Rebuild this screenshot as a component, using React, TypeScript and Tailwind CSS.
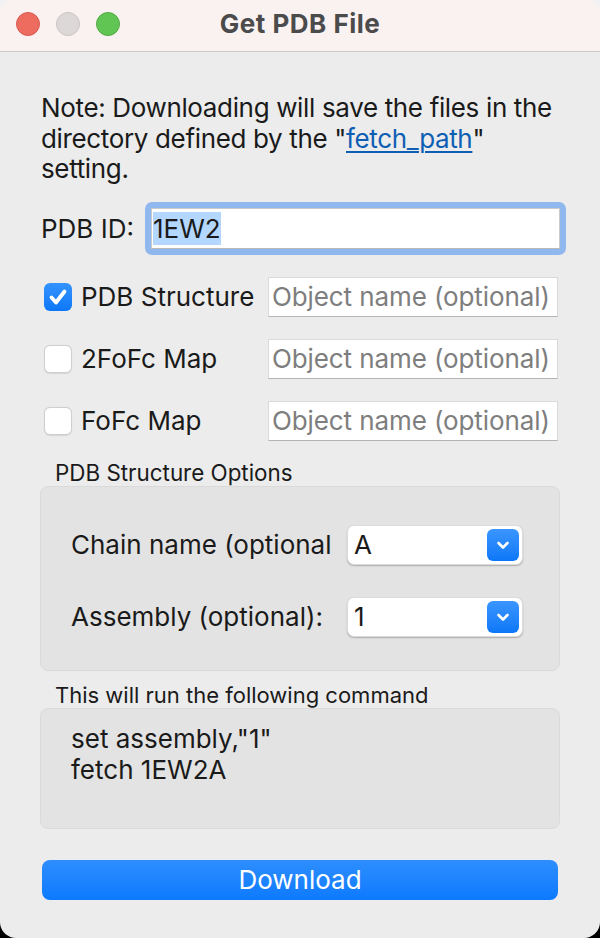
import { useState } from "react";

function TrafficLights() {
  return (
    <div className="flex items-center gap-[16px] pl-[16px]">
      <span className="block w-[24px] h-[24px] rounded-full bg-[#ee6b60] border border-[#d65b50]" />
      <span className="block w-[24px] h-[24px] rounded-full bg-[#ddd8d8] border border-[#c8c3c3]" />
      <span className="block w-[24px] h-[24px] rounded-full bg-[#61c554] border border-[#52ab44]" />
    </div>
  );
}

function CheckBox({ checked }: { checked: boolean }) {
  if (checked) {
    return (
      <span className="flex items-center justify-center w-[28px] h-[28px] shrink-0 rounded-[6px] bg-linear-to-b from-[#3393ff] to-[#0a77f7]">
        <svg width="28" height="28" viewBox="0 0 28 28">
          <path
            d="M7.5 14.5 L12 19.5 L20.5 8.5"
            fill="none"
            stroke="white"
            strokeWidth="3.8"
            strokeLinecap="round"
            strokeLinejoin="round"
          />
        </svg>
      </span>
    );
  }
  return (
    <span className="block w-[28px] h-[28px] shrink-0 rounded-[6px] bg-white border border-[#cfcfcf] shadow-[0_0.5px_1px_rgba(0,0,0,0.1)]" />
  );
}

function ObjectRow({ label, checked }: { label: string; checked: boolean }) {
  return (
    <div className="flex items-center h-[40px] pl-[10px]">
      <CheckBox checked={checked} />
      <span className="w-[196px] pl-[9px] shrink-0 whitespace-nowrap">{label}</span>
      <input
        placeholder="Object name (optional)"
        className="w-[290px] h-[40px] shrink-0 bg-white border border-[#dadada] border-b-[#b4b4b4] px-[3px] outline-none tracking-[-0.1px] placeholder:text-[#7e7e7e]"
      />
    </div>
  );
}

function Combo({ value }: { value: string }) {
  return (
    <div className="flex items-center justify-between w-[176px] h-[40px] shrink-0 bg-white rounded-[7px] border border-[#dcdcdc] shadow-[0_1px_1.5px_rgba(0,0,0,0.25)] pl-[6px] pr-[3px]">
      <span>{value}</span>
      <span className="flex items-center justify-center w-[32px] h-[32px] rounded-[6px] bg-linear-to-b from-[#3a96ff] to-[#0a77f8]">
        <svg width="32" height="32" viewBox="0 0 32 32">
          <path
            d="M11.5 14 L16 18.5 L20.5 14"
            fill="none"
            stroke="white"
            strokeWidth="2.6"
            strokeLinecap="round"
            strokeLinejoin="round"
          />
        </svg>
      </span>
    </div>
  );
}

export default function App() {
  const [pdbId] = useState("1EW2");

  return (
    <div className="w-[600px] h-[938px] bg-linear-to-b from-[#f2f2f2] from-50% to-black to-50% font-['Inter','Liberation_Sans',sans-serif] text-[26px] text-[#1a1a1a]">
      <div className="flex flex-col w-[600px] h-[938px] bg-[#ececec] rounded-t-[12px] rounded-b-[16px] overflow-hidden">
        {/* title bar */}
        <div className="grid grid-cols-[1fr_auto_1fr] items-center h-[52px] pb-[4px] shrink-0 bg-[#faf1f1] border-b border-[#cbcbcb]">
          <TrafficLights />
          <h1 className="text-[26px] font-bold text-[#4b4b4b] tracking-[0.5px]">Get PDB File</h1>
          <div />
        </div>

        <div className="flex flex-col px-[34px] pt-[41px]">
          <div className="pl-[7px] leading-[30.5px] tracking-[-0.35px]">
            <div>Note: Downloading will save the files in the</div>
            <div>
              <span>directory defined by the "</span>
              <a className="text-[#0e5fb4] underline underline-offset-[3px] decoration-[1.5px]">fetch_path</a>
              <span>"</span>
            </div>
            <div>setting.</div>
          </div>

          <div className="flex items-center mt-[17px]">
            <span className="w-[111px] pl-[7px] shrink-0">PDB ID:</span>
            <div className="w-[421px] h-[53px] shrink-0 rounded-[7px] bg-[#91b8ee] p-[6px]">
              <div className="flex items-center h-full bg-white border border-[#cacaca] border-b-[#b9b9b9] pl-[1px]">
                <span className="bg-[#b3d7ff] leading-[33px]">{pdbId}</span>
              </div>
            </div>
          </div>

          <div className="flex flex-col gap-[22px] mt-[22px]">
            <ObjectRow label="PDB Structure" checked />
            <ObjectRow label="2FoFc Map" checked={false} />
            <ObjectRow label="FoFc Map" checked={false} />
          </div>

          <div className="mt-[19px] pl-[21px] text-[22.4px] leading-[26px]">PDB Structure Options</div>
          <div className="mx-[6px] h-[185px] rounded-[8px] bg-[#e3e3e3] border border-[#dadada] pl-[30px] pt-[38px] flex flex-col gap-[32px]">
            <div className="flex items-center">
              <span className="w-[276px] shrink-0 whitespace-nowrap">Chain name (optional</span>
              <Combo value="A" />
            </div>
            <div className="flex items-center">
              <span className="w-[276px] shrink-0 whitespace-nowrap">Assembly (optional):</span>
              <Combo value="1" />
            </div>
          </div>

          <div className="mt-[11px] pl-[21px] text-[22px] leading-[26px]">This will run the following command</div>
          <div className="mx-[6px] h-[121px] rounded-[8px] bg-[#e3e3e3] border border-[#dadada] pl-[30px] pt-[14px] leading-[31.5px]">
            <div>set assembly,"1"</div>
            <div>fetch 1EW2A</div>
          </div>

          <button className="mx-[8px] mt-[31px] h-[40px] rounded-[8px] bg-linear-to-b from-[#2c8efe] to-[#0b7aff] text-white text-[26px]">
            Download
          </button>
        </div>
      </div>
    </div>
  );
}
